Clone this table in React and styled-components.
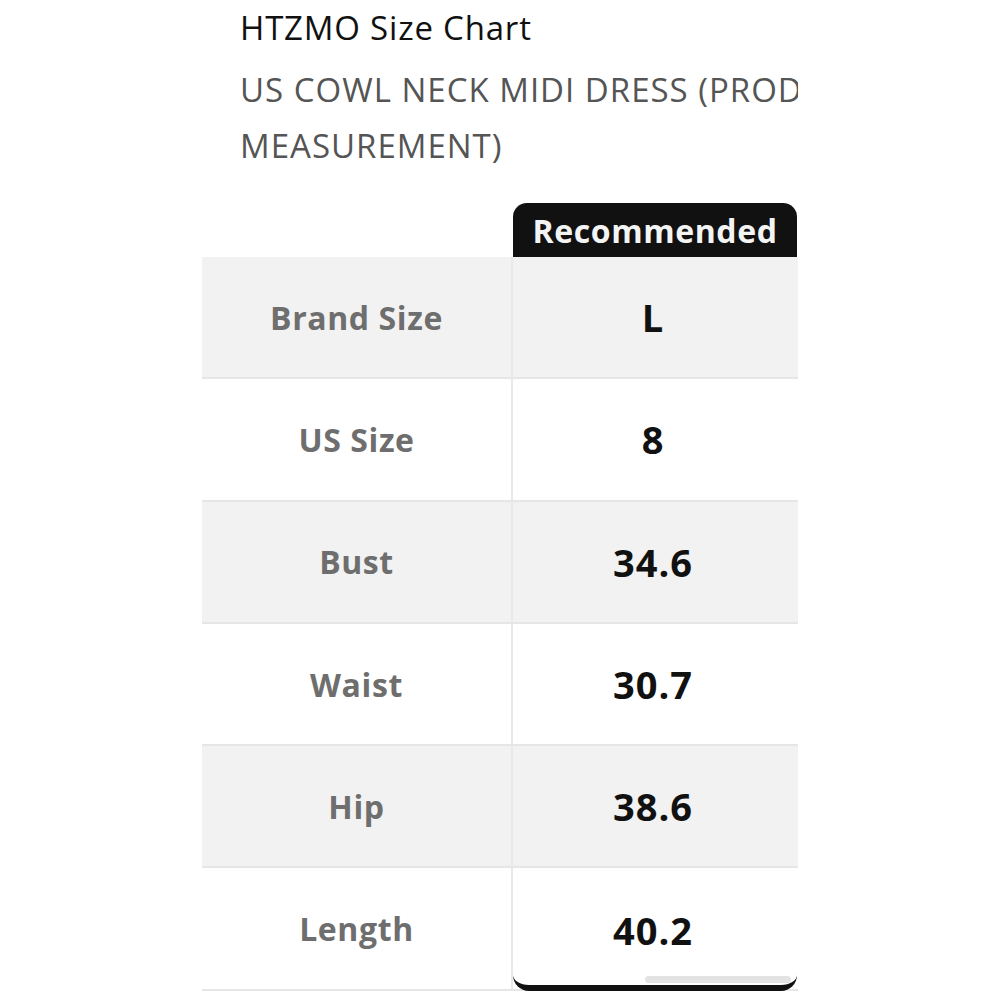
import React from "react";
import { styled, createGlobalStyle } from "styled-components";

const rows = [
  { label: "Brand Size", value: "L" },
  { label: "US Size", value: "8" },
  { label: "Bust", value: "34.6" },
  { label: "Waist", value: "30.7" },
  { label: "Hip", value: "38.6" },
  { label: "Length", value: "40.2" },
];

function App() {
  return (
    <>
      <GlobalStyle />
      <Page>
        <Clip>
          <Header>
            <Title>HTZMO Size Chart</Title>
            <Subtitle>
              US COWL NECK MIDI DRESS (PRODUCT
              <br />
              MEASUREMENT)
            </Subtitle>
          </Header>
          <Table>
            <HeadRow>
              <HeadSpacer />
              <Badge>Recommended</Badge>
            </HeadRow>
            {rows.map((row, i) => (
              <Row key={row.label} $shaded={i % 2 === 0}>
                <Label>{row.label}</Label>
                <Value $last={i === rows.length - 1}>
                  {row.value}
                  {i === rows.length - 1 && <Thumb />}
                </Value>
              </Row>
            ))}
          </Table>
        </Clip>
      </Page>
    </>
  );
}

const GlobalStyle = createGlobalStyle`
  body {
    margin: 0;
    background: #fff;
    font-family: "Open Sans", "Noto Sans", sans-serif;
  }
`;

const Page = styled.div`
  width: 1000px;
  height: 1000px;
  padding-left: 202px;
  box-sizing: border-box;
`;

const Clip = styled.div`
  width: 596px;
  height: 1000px;
  overflow: hidden;
`;

const Header = styled.div`
  padding: 6px 0 0 38px;
  white-space: nowrap;
`;

const Title = styled.div`
  font-size: 33px;
  letter-spacing: 0.8px;
  line-height: 44px;
  color: #111;
`;

const Subtitle = styled.div`
  margin-top: 12px;
  font-size: 33px;
  letter-spacing: 1px;
  line-height: 56px;
  color: #555;
`;

const Table = styled.div`
  margin-top: 29px;
`;

const HeadRow = styled.div`
  display: grid;
  grid-template-columns: 311px 284px;
  height: 54px;
`;

const HeadSpacer = styled.div``;

const Badge = styled.div`
  background: #111;
  color: #f4f4f4;
  border-radius: 14px 14px 0 0;
  display: flex;
  align-items: center;
  justify-content: center;
  font-size: 32px;
  letter-spacing: 0.6px;
  font-weight: 700;
`;

const Row = styled.div`
  display: grid;
  grid-template-columns: 311px 284px 1px;
  height: 122.3px;
  box-sizing: border-box;
  background: ${(p) => (p.$shaded ? "#f2f2f2" : "#fff")};
  border-bottom: 2px solid #e6e6e6;
`;

const Label = styled.div`
  display: flex;
  align-items: center;
  justify-content: center;
  font-size: 32px;
  letter-spacing: 0.6px;
  font-weight: 700;
  color: #6e6e6e;
  border-right: 2px solid #e9e9e9;
`;

const Value = styled.div`
  position: relative;
  display: flex;
  align-items: center;
  justify-content: center;
  padding-right: 4px;
  font-size: 38px;
  letter-spacing: 1px;
  font-weight: 700;
  color: #111;
  ${(p) =>
    p.$last &&
    `
    margin-bottom: -2px;
    border-bottom: 6px solid #111;
    border-radius: 0 0 16px 16px;
    padding-top: 6px;
  `}
`;

const Thumb = styled.div`
  position: absolute;
  left: 132px;
  right: 6px;
  bottom: 2px;
  height: 7px;
  border-radius: 4px;
  background: #e3e3e3;
`;

export default App;
